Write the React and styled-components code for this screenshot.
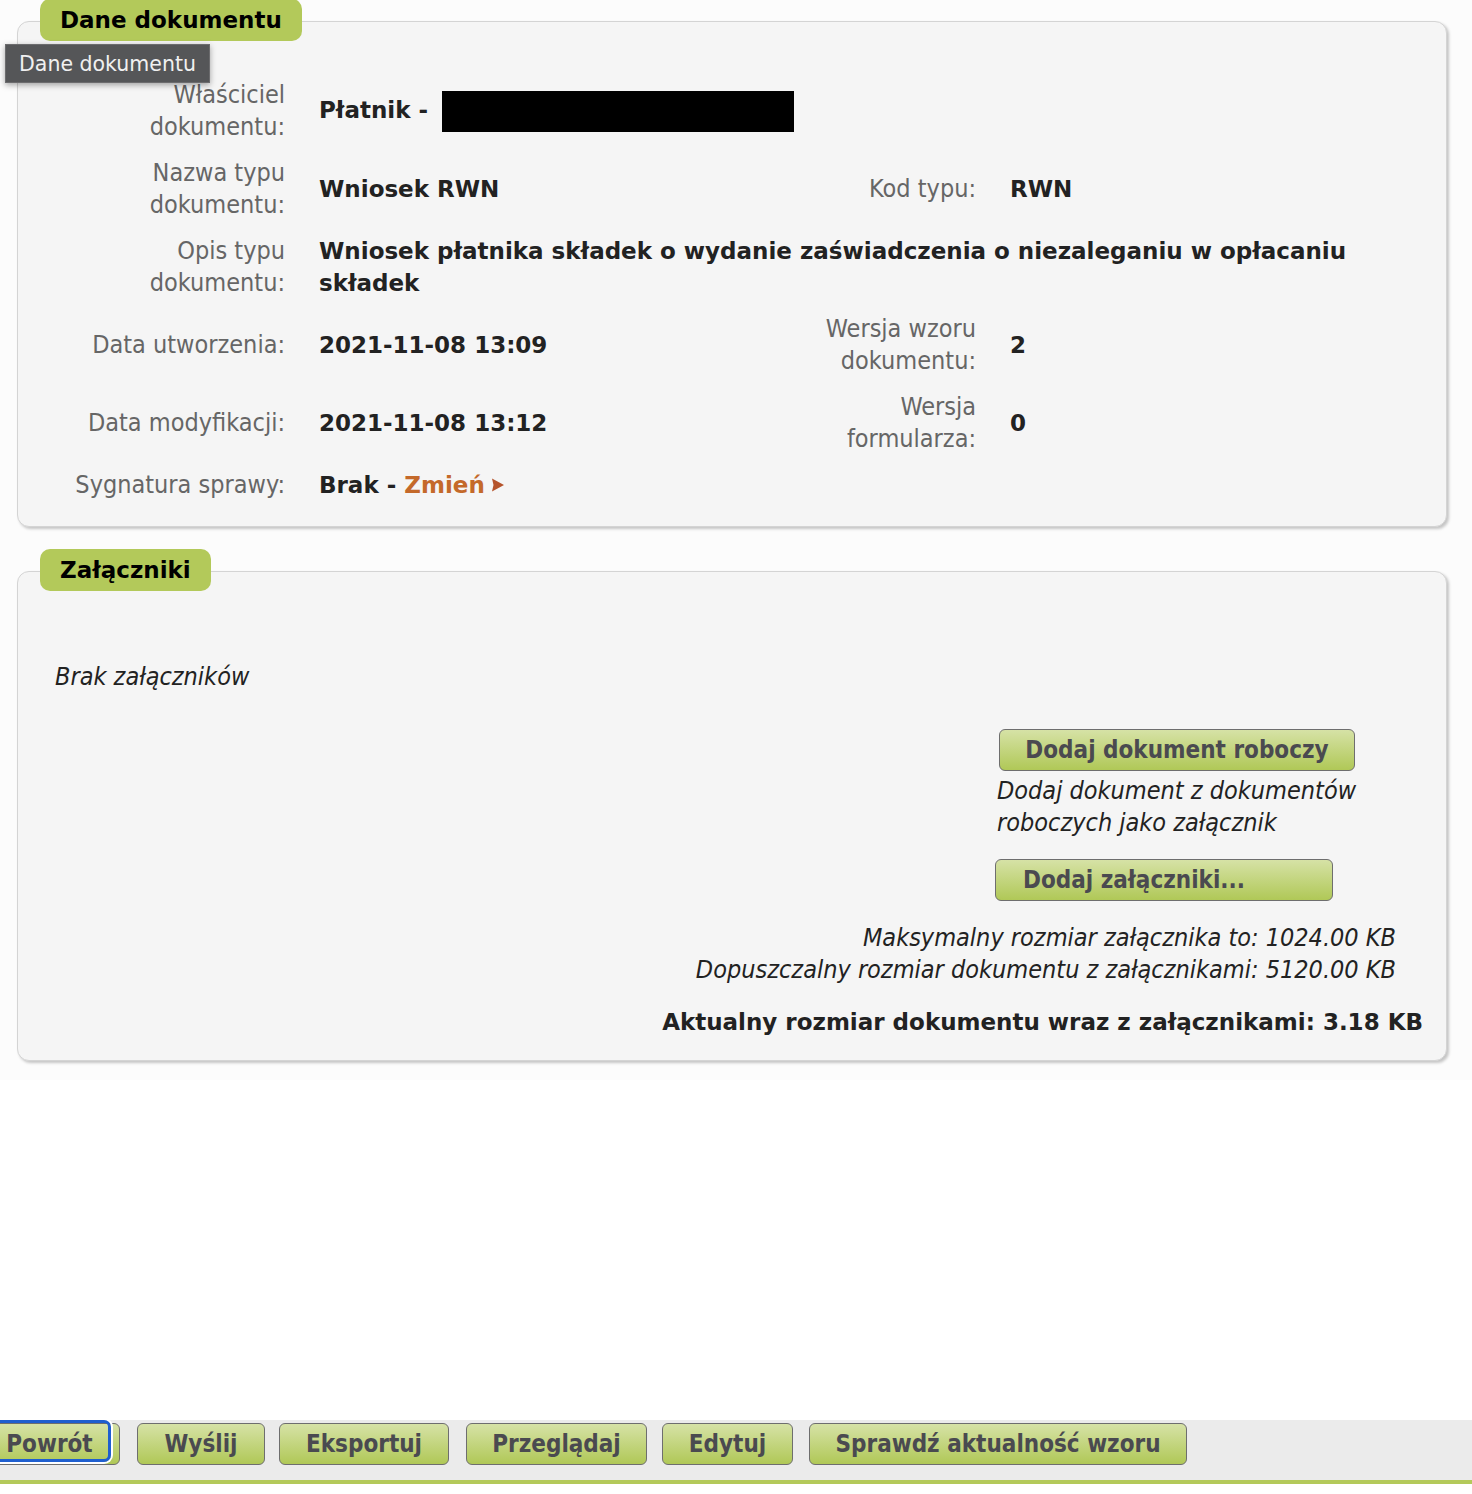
import React from 'react'
import styled, { createGlobalStyle } from 'styled-components'

const Global = createGlobalStyle`
body {
  margin: 0;
  background: #ffffff;
  font-family: "DejaVu Sans Condensed", "DejaVu Sans", sans-serif;
}
`

const Page = styled.div`
min-height: 1494px;
display: flex;
flex-direction: column;
`

const Content = styled.div`
background: #fcfcfc;
padding: 0 25px 19px 17px;
`

const Section = styled.section`
position: relative;
display: flex;
flex-direction: column;
margin-top: ${p => p.$top}px;
`

const Tab = styled.div`
position: relative;
z-index: 1;
align-self: flex-start;
margin-left: 23px;
height: 42px;
padding: 0 20px;
display: flex;
align-items: center;
background: #b3c95a;
border-radius: 10px;
color: #000;
font-family: "DejaVu Sans", sans-serif;
font-weight: bold;
font-size: 23px;
`

const Tooltip = styled.div`
position: absolute;
z-index: 2;
left: -12px;
top: 45px;
width: 205px;
height: 39px;
box-sizing: border-box;
display: flex;
align-items: center;
justify-content: center;
background: #555658;
border: 1px solid #6c6c6e;
color: #f0f0f0;
font-family: "DejaVu Sans", sans-serif;
font-size: 20.5px;
box-shadow: 0 2px 6px rgba(0, 0, 0, 0.35);
`

const Panel = styled.div`
margin-top: -20px;
background: #f5f5f5;
border: 1px solid #d4d4d4;
border-radius: 12px;
box-shadow: 2px 2px 3px rgba(0, 0, 0, 0.22);
`

const InfoGrid = styled.div`
display: grid;
grid-template-columns: 220px 463px 160px 390px;
column-gap: 34px;
row-gap: 14px;
align-items: center;
padding: 57px 46px 25px 47px;
`

const Label = styled.div`
text-align: right;
color: #666;
font-size: 25px;
line-height: 32px;
align-self: ${p => (p.$top ? 'start' : 'center')};
`

const Value = styled.div`
color: #222;
font-family: "DejaVu Sans", sans-serif;
font-weight: bold;
font-size: 23px;
line-height: 32px;
grid-column: ${p => p.$span || 'auto'};
align-self: ${p => (p.$top ? 'start' : 'center')};
`

const Redacted = styled.span`
display: inline-block;
width: 352px;
height: 41px;
margin-left: 6px;
background: #000;
vertical-align: middle;
`

const Link = styled.span`
color: #c4692a;
display: inline-flex;
align-items: center;
gap: 6px;
`

const AttachBody = styled.div`
display: flex;
flex-direction: column;
padding: 89px 22px 22px 37px;
`

const Italic = styled.div`
font-style: italic;
color: #222;
font-size: 25px;
line-height: 32px;
`

const RightBlock = styled.div`
align-self: flex-end;
width: 372px;
margin-right: 57px;
margin-top: 36px;
display: flex;
flex-direction: column;
`

const Button = styled.button`
position: relative;
box-sizing: border-box;
height: 42px;
width: ${p => p.$w}px;
flex: none;
margin-left: ${p => p.$ml || 0}px;
margin-top: ${p => p.$mt || 0}px;
padding: 0 0 0 ${p => p.$pl || 0}px;
text-align: ${p => (p.$pl ? 'left' : 'center')};
background: linear-gradient(#d6e2a6, #b0c857);
border: 1px solid #6e6e6e;
border-radius: 6px;
color: #4a4a50;
font-family: "DejaVu Sans Condensed", "DejaVu Sans", sans-serif;
font-weight: bold;
font-size: 24px;
`

const Focused = styled(Button)`
&::after {
  content: '';
  position: absolute;
  top: -4px;
  left: -4px;
  right: 8px;
  bottom: 2px;
  border: 3px solid #1f5fcf;
  border-radius: 7px;
  box-shadow: 0 0 0 2px #ffffff;
}
`

const Note = styled(Italic)`
margin: 4px 0 0 2px;
`

const Sizes = styled(Italic)`
text-align: right;
margin: 21px 28px 0 0;
`

const Total = styled.div`
text-align: right;
margin: 20px 1px 0 0;
color: #222;
font-family: "DejaVu Sans", sans-serif;
font-weight: bold;
font-size: 23px;
line-height: 32px;
`

const Bar = styled.div`
margin-top: auto;
margin-bottom: 10px;
height: 57px;
padding-top: 3px;
background: #ebebeb;
border-bottom: 4px solid #b3c95a;
display: flex;
align-items: flex-start;
gap: 15px;
`

const Arrow = () => (
  <svg width="14" height="16" viewBox="0 0 14 16">
    <path d="M1 1.5 L13 8 L1 14.5 L2.5 8 Z" fill="#b5532b" />
  </svg>
)

export default function App() {
  return (
    <Page>
      <Global />
      <Content>
        <Section $top={-1}>
          <Tab>Dane dokumentu</Tab>
          <Tooltip>Dane dokumentu</Tooltip>
          <Panel>
            <InfoGrid>
              <Label>Właściciel dokumentu:</Label>
              <Value $span="2 / 5">Płatnik - <Redacted /></Value>

              <Label>Nazwa typu dokumentu:</Label>
              <Value>Wniosek RWN</Value>
              <Label>Kod typu:</Label>
              <Value>RWN</Value>

              <Label $top>Opis typu dokumentu:</Label>
              <Value $span="2 / 5" $top>Wniosek płatnika składek o wydanie zaświadczenia o niezaleganiu w opłacaniu składek</Value>

              <Label>Data utworzenia:</Label>
              <Value>2021-11-08 13:09</Value>
              <Label>Wersja wzoru dokumentu:</Label>
              <Value>2</Value>

              <Label>Data modyfikacji:</Label>
              <Value>2021-11-08 13:12</Value>
              <Label>Wersja formularza:</Label>
              <Value>0</Value>

              <Label>Sygnatura sprawy:</Label>
              <Value $span="2 / 5">Brak - <Link>Zmień<Arrow /></Link></Value>
            </InfoGrid>
          </Panel>
        </Section>

        <Section $top={22}>
          <Tab>Załączniki</Tab>
          <Panel>
            <AttachBody>
              <Italic>Brak załączników</Italic>
              <RightBlock>
                <Button $w={356} $ml={4}>Dodaj dokument roboczy</Button>
                <Note>Dodaj dokument z dokumentów roboczych jako załącznik</Note>
                <Button $w={338} $mt={20} $pl={27}>Dodaj załączniki...</Button>
              </RightBlock>
              <Sizes>
                Maksymalny rozmiar załącznika to: 1024.00 KB<br />
                Dopuszczalny rozmiar dokumentu z załącznikami: 5120.00 KB
              </Sizes>
              <Total>Aktualny rozmiar dokumentu wraz z załącznikami: 3.18 KB</Total>
            </AttachBody>
          </Panel>
        </Section>
      </Content>

      <Bar>
        <Focused $w={141} $ml={-21}>Powrót</Focused>
        <Button $w={128} $ml={2}>Wyślij</Button>
        <Button $w={170} $ml={-1}>Eksportuj</Button>
        <Button $w={181} $ml={2}>Przeglądaj</Button>
        <Button $w={131}>Edytuj</Button>
        <Button $w={378} $ml={1}>Sprawdź aktualność wzoru</Button>
      </Bar>
    </Page>
  )
}
